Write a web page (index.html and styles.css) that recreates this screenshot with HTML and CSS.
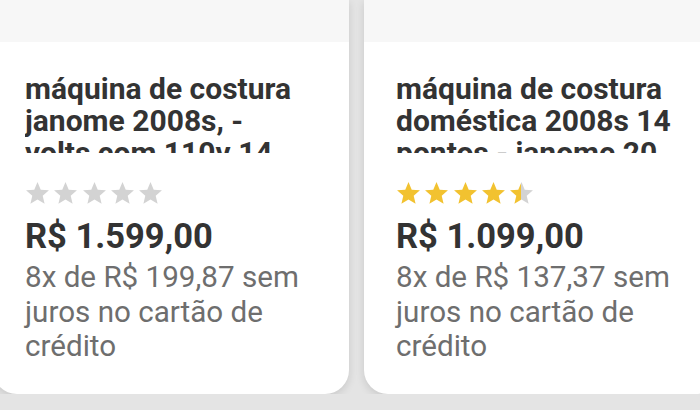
FILE: index.html
```html
<!DOCTYPE html>
<html lang="pt-BR">
<head>
<meta charset="UTF-8">
<meta name="viewport" content="width=device-width, initial-scale=1.0">
<title>Máquinas de costura</title>
<link rel="stylesheet" href="styles.css">
</head>
<body>
<svg width="0" height="0" class="defs">
  <defs>
    <linearGradient id="half">
      <stop offset="50%" stop-color="#f2c230"/>
      <stop offset="50%" stop-color="#d3d3d3"/>
    </linearGradient>
    <polygon id="star" points="12,1 15.1,8.3 23,8.9 17,14.1 18.8,21.9 12,17.8 5.2,21.9 7,14.1 1,8.9 8.9,8.3"/>
  </defs>
</svg>

<div class="row">
  <div class="card">
    <div class="thumb"></div>
    <div class="info">
      <h2 class="title">máquina de costura janome 2008s, - volts com 110v 14 pontos</h2>
      <div class="stars">
        <svg viewBox="0 0 24 24" class="off"><use href="#star"/></svg>
        <svg viewBox="0 0 24 24" class="off"><use href="#star"/></svg>
        <svg viewBox="0 0 24 24" class="off"><use href="#star"/></svg>
        <svg viewBox="0 0 24 24" class="off"><use href="#star"/></svg>
        <svg viewBox="0 0 24 24" class="off"><use href="#star"/></svg>
      </div>
      <div class="price">R$ 1.599,00</div>
      <div class="installments">8x de R$ 199,87 sem juros no cartão de crédito</div>
    </div>
  </div>

  <div class="card">
    <div class="thumb"></div>
    <div class="info">
      <h2 class="title">máquina de costura doméstica 2008s 14 pontos - janome 20 anos</h2>
      <div class="stars">
        <svg viewBox="0 0 24 24" class="on"><use href="#star"/></svg>
        <svg viewBox="0 0 24 24" class="on"><use href="#star"/></svg>
        <svg viewBox="0 0 24 24" class="on"><use href="#star"/></svg>
        <svg viewBox="0 0 24 24" class="on"><use href="#star"/></svg>
        <svg viewBox="0 0 24 24" class="half"><use href="#star"/></svg>
      </div>
      <div class="price">R$ 1.099,00</div>
      <div class="installments">8x de R$ 137,37 sem juros no cartão de crédito</div>
    </div>
  </div>
</div>
</body>
</html>
```

FILE: styles.css
```css
body {
  margin: 0;
  background-color: #e4e4e4;
  font-family: Roboto, "Noto Sans", sans-serif;
  overflow: hidden;
}
.defs {
  position: absolute;
}
.row {
  display: flex;
  gap: 15px;
  margin-left: -7px;
}
.card {
  flex-shrink: 0;
  width: 356px;
  background-color: #fff;
  border-radius: 0 0 24px 24px;
  box-shadow: 0 3px 8px rgba(0, 0, 0, 0.12);
  overflow: hidden;
}
.thumb {
  height: 42px;
  background-color: #f7f7f7;
}
.info {
  padding: 31px 40px 30px 32px;
}
.title {
  margin: 0;
  font-size: 30px;
  line-height: 32px;
  font-weight: 700;
  color: #333;
  max-height: 80px;
  overflow: hidden;
}
.stars {
  display: flex;
  gap: 3.3px;
  margin-top: 28px;
  height: 25px;
}
.stars svg {
  width: 25px;
  height: 25px;
}
.stars .off {
  fill: #d3d3d3;
}
.stars .on {
  fill: #f2c230;
}
.stars .half {
  fill: url(#half);
}
.price {
  margin-top: 10px;
  font-size: 34.5px;
  line-height: 40px;
  font-weight: 700;
  color: #333;
}
.installments {
  margin-top: 4px;
  font-size: 29.6px;
  line-height: 34.5px;
  color: #6e6e6e;
}
```
